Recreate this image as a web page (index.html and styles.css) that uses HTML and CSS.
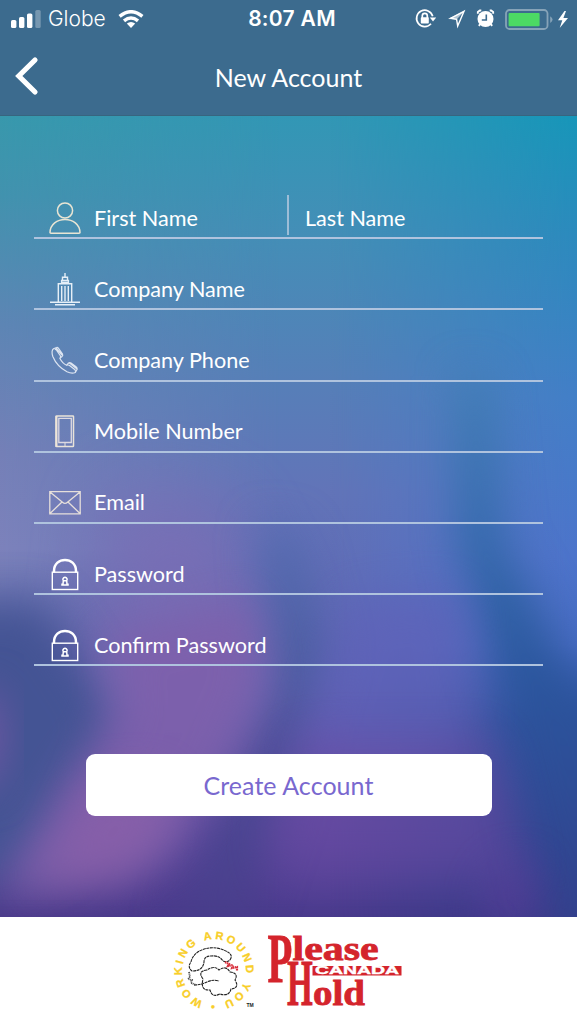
FILE: index.html
```html
<!DOCTYPE html>
<html lang="en">
<head>
<meta charset="utf-8">
<title>New Account</title>
<link rel="stylesheet" href="styles.css">
</head>
<body>
<div class="screen">
  <header class="header">
    <div class="status">
      <div class="status-left">
        <svg class="signal" width="31" height="18" viewBox="0 0 31 18" fill="#fff"><rect x="0" y="10" width="5.4" height="8" rx="1.6"/><rect x="8" y="7" width="5.4" height="11" rx="1.6"/><rect x="16" y="3.500" width="5.400" height="14.500" rx="1.600"/><rect x="24.300" y="0" width="5.400" height="18" rx="1.600" opacity=".3"/></svg>
        <span class="carrier">Globe</span>
        <svg width="26" height="18" viewBox="0 0 26 18" fill="none" stroke="#fff" stroke-width="3.400"><path d="M1.600 6.400Q13-3 24.400 6.400M6 10.900Q13 5 20 10.900"/><path d="M8.800 13.600Q13 10.400 17.200 13.600L13 18Z" fill="#fff" stroke="none"/></svg>
      </div>
      <span class="clock">8:07 AM</span>
      <svg class="indicators" width="156" height="24" viewBox="0 0 156 24" fill="none">
        <g stroke="#fff" stroke-width="1.700"><path d="M18.700 9.200A8.200 8.200 0 1 0 17 16.800"/><path d="M8.300 11V8.800a2.500 2.500 0 0 1 5 0V11"/></g><rect x="6.800" y="10.300" width="8" height="6.300" rx=".8" fill="#fff"/><path d="M15.800 10.500H22.200L19 14.500Z" fill="#fff"/>
        <path d="M36.500 11.300L50 4.300L43.700 19L42.600 12.400Z" stroke="#fff" stroke-width="1.400"/><path d="M34 12L51 3.500L42.600 12.500Z" fill="#fff" opacity=".6"/>
        <circle cx="71.500" cy="12" r="8" fill="#fff"/><path d="M63.800 6.800V5l2-1.500h1.500M79.200 6.800V5l-2-1.500h-1.500M66 17l-1 2M77 17l1 2" stroke="#fff" stroke-width="1.800"/><path d="M72.300 7.500V13h-4.500" stroke="#3c6b8e" stroke-width="1.600"/>
        <rect x="92" y="3" width="41.500" height="19" rx="3.500" stroke="#86a3b8" stroke-width="1.800"/><rect x="94.600" y="6" width="31" height="13.200" rx="1" fill="#4cd964"/><path d="M136.200 9.200Q141 12.500 136.200 16Z" fill="#86a3b8"/><path d="M150.500 4L144 13.300h4.300L145.700 21L154 10.900h-4.600L152 4Z" fill="#fff"/>
      </svg>
    </div>
    <div class="nav">
      <svg class="back" width="24" height="40" viewBox="0 0 24 40" fill="none" stroke="#fff" stroke-width="5.200" stroke-linecap="round"><path d="M20 4L3.800 20L20 36"/></svg>
      <h1 class="title">New Account</h1>
    </div>
  </header>

  <main class="content">
    <svg class="backdrop" viewBox="0 116 577 801" preserveAspectRatio="none">
      <defs>
        <linearGradient id="left" x2="0" y2="1"><stop offset="0" stop-color="#3898ac"/><stop offset=".1" stop-color="#4292ae"/><stop offset=".26" stop-color="#5d85b4"/><stop offset=".42" stop-color="#7480b7"/><stop offset=".54" stop-color="#7c82bb"/><stop offset=".62" stop-color="#6870ae"/><stop offset=".75" stop-color="#4c5199"/><stop offset="1" stop-color="#4b3a8a"/></linearGradient>
        <linearGradient id="middle" x2="0" y2="1"><stop offset="0" stop-color="#3297b5"/><stop offset=".15" stop-color="#448eb7"/><stop offset=".33" stop-color="#567fb8"/><stop offset=".47" stop-color="#6274b8"/><stop offset=".7" stop-color="#6065b6"/><stop offset=".85" stop-color="#624ca2"/><stop offset="1" stop-color="#4b3b8e"/></linearGradient>
        <linearGradient id="right" x2="0" y2="1"><stop offset="0" stop-color="#1796b9"/><stop offset=".15" stop-color="#2c8abd"/><stop offset=".35" stop-color="#427fc7"/><stop offset=".55" stop-color="#4c74cb"/><stop offset=".66" stop-color="#486cc4"/><stop offset=".76" stop-color="#2b519c"/><stop offset="1" stop-color="#353b88"/></linearGradient>
        <linearGradient id="valley" x2="0" y2="1"><stop offset="0" stop-color="#506caf"/><stop offset=".35" stop-color="#4a5b9f"/><stop offset=".6" stop-color="#4b4994"/><stop offset="1" stop-color="#493c8a"/></linearGradient>
        <linearGradient id="channel" x2="0" y2="1"><stop offset="0" stop-color="#3c7dae"/><stop offset=".25" stop-color="#2f6ba9"/><stop offset=".55" stop-color="#2b559d"/><stop offset="1" stop-color="#33408c"/></linearGradient>
        <linearGradient id="fadeRight"><stop offset="0" stop-color="#000"/><stop offset="1" stop-color="#fff"/></linearGradient>
        <linearGradient id="fadeLeft"><stop offset="0" stop-color="#fff"/><stop offset="1" stop-color="#000"/></linearGradient>
        <mask id="maskRight"><rect x="330" y="116" width="247" height="801" fill="url(#fadeRight)"/></mask>
        <mask id="maskLeft"><rect x="0" y="116" width="280" height="801" fill="url(#fadeLeft)"/></mask>
        <filter id="soft" x="-60%" y="-60%" width="220%" height="220%" color-interpolation-filters="sRGB"><feGaussianBlur stdDeviation="22"/></filter>
        <filter id="wide" x="-60%" y="-60%" width="220%" height="220%" color-interpolation-filters="sRGB"><feGaussianBlur stdDeviation="36"/></filter>
      </defs>
      <rect y="116" width="577" height="801" fill="url(#middle)"/>
      <rect y="116" width="280" height="801" fill="url(#left)" mask="url(#maskLeft)"/>
      <rect x="330" y="116" width="247" height="801" fill="url(#right)" mask="url(#maskRight)"/>
      <path d="M110 490L220 500L280 620L250 750L60 740L100 600Z" fill="#7c6cb4" opacity=".75" filter="url(#wide)"/>
      <path d="M-60 608L40 602L72 650L118 720L60 860L-60 900Z" fill="#445494" filter="url(#soft)"/>
      <path d="M-40 690L0 700L-3 780L-40 790Z" fill="#7657a5" filter="url(#soft)"/>
      <path d="M262 525L295 535L328 650L290 780L235 950L170 950L215 810L275 690Z" fill="url(#valley)" filter="url(#soft)"/>
      <path d="M105 635L250 600L265 680L225 775L165 860L-10 905L75 770L120 710Z" fill="#7e60ac" opacity=".9" filter="url(#soft)"/>
      <path d="M90 780L165 775L170 830L130 885L30 890Z" fill="#8c60a9" opacity=".7" filter="url(#soft)"/>
      <path d="M462 375L485 380L500 540L570 670L620 730L620 940L560 940L505 720L460 540Z" fill="url(#channel)" filter="url(#soft)"/>
      <path d="M350 600L460 590L475 745L400 780L300 770Z" fill="#6061b9" opacity=".6" filter="url(#soft)"/>
      <path d="M300 740L490 740L525 880L280 880L270 830Z" fill="#6b4ba4" opacity=".5" filter="url(#soft)"/>
      <path d="M495 875L530 860L540 925L480 930Z" fill="#6a3fa0" opacity=".5" filter="url(#soft)"/>
      <path d="M-60 930H480V980H-60Z" fill="#403783" opacity=".7" filter="url(#soft)"/>
    </svg>
    <form class="form">
      <div class="row names">
        <div class="name-cell first">
          <svg class="icon" viewBox="0 0 34 34" fill="none" stroke="#e9e5d4" stroke-width="1.500"><circle cx="17" cy="9.500" r="7.600"/><path d="M2 31.800C2 14 32 14 32 31.800Q32 32.200 31 32.200H3Q2 32.200 2 31.800Z"/></svg>
          <label>First Name</label>
        </div>
        <div class="name-cell last"><label>Last Name</label></div>
      </div>
      <div class="row">
        <svg class="icon" viewBox="0 0 34 34" fill="none" stroke="#e6eff7" stroke-width="1.400"><path d="M17 1V5.500M14.500 9V5.200h5V9M13.600 12V8.500h6.800v3M14 10.500h6M10.300 30.500V11.700h13.400V30.500M13.700 14v15M17 14v15M20.300 14v15M2 30.300h30M7 32.800h20"/></svg>
        <label>Company Name</label>
      </div>
      <div class="row">
        <svg class="icon" viewBox="0 0 34 34" fill="none" stroke="#dce4f1" stroke-width="1.200" stroke-linejoin="round"><path d="M8.500 3.500L5.500 4.700Q3 6.500 4.800 12.500Q9 22.500 19 27.800Q24 30.200 27.300 28.500L29.200 25.300Q29.400 24.100 28 22.800L23 19Q21.500 18.200 20 19.500L18.600 21.300Q14.500 19.500 11.800 14.300L14 12.500Q15.300 11.500 14.400 9.800L10.500 4.300Q9.500 3 8.500 3.500ZM6.800 5.700Q7.500 5 8.400 6L12.500 12Q12.800 13.200 11.800 14.300M18.600 21.300Q20 20.700 21.200 21.300L27 25.800Q28 27.200 27.300 28.500M8 4L14 11M21.500 19L29 25"/></svg>
        <label>Company Phone</label>
      </div>
      <div class="row">
        <svg class="icon" viewBox="0 0 34 34" fill="none"><rect x="8" y="1" width="17.500" height="30.500" rx=".6" stroke="#e9e3d9" stroke-width="1.500"/><path d="M8.500 1V32" stroke="#eee5d8" stroke-width="2"/><path d="M10.800 3.300H23.300V27.500H10.800Z" stroke="#ddd9e2" stroke-width="1.300"/><path d="M17 28v3" stroke="#e9e3d9"/></svg>
        <label>Mobile Number</label>
      </div>
      <div class="row">
        <svg class="icon" viewBox="0 0 34 34" fill="none" stroke="#e6dfdb" stroke-width="1.300"><path d="M1.800 5.600H32.200V27.800H1.800ZM2 6L14.500 16.300Q17 18.500 19.500 16.300L32 6M2 27.500L14 16M32 27.500L20 16"/></svg>
        <label>Email</label>
      </div>
      <div class="row">
        <svg class="icon" viewBox="0 0 34 34" fill="none" stroke="#fff"><path d="M6 15.500V14C6-.8 28-.8 28 14V15.500" stroke-width="2.500"/><rect x="4.300" y="15.200" width="25.400" height="17.300" stroke-width="1.400"/><path d="M15.300 23.700A2.100 2.100 0 1 1 18.700 23.700H15.300L15 27.300H14V28H20V27.300H19L18.700 23.700" stroke-width="1.500"/></svg>
        <label>Password</label>
      </div>
      <div class="row">
        <svg class="icon" viewBox="0 0 34 34" fill="none" stroke="#fff"><path d="M6 15.500V14C6-.8 28-.8 28 14V15.500" stroke-width="2.500"/><rect x="4.300" y="15.200" width="25.400" height="17.300" stroke-width="1.400"/><path d="M15.300 23.700A2.100 2.100 0 1 1 18.700 23.700H15.300L15 27.300H14V28H20V27.300H19L18.700 23.700" stroke-width="1.500"/></svg>
        <label>Confirm Password</label>
      </div>
      <button class="submit" type="button">Create Account</button>
    </form>
  </main>

  <footer class="footer">
    <svg width="577" height="107" viewBox="0 917 577 107">
      <defs><path id="ring" d="M202 1003.500A34.500 34.500 0 1 1 226 1003.500A34.500 34.500 0 0 1 202 1003.500"/></defs>
      <text class="ring-text" dy="2.500"><textPath href="#ring" startOffset="0" textLength="207">WORKING AROUND YOU •</textPath></text>
      <g fill="none" stroke="#222" stroke-width="1.100" stroke-dasharray="3 .6">
        <path d="M191 962C193 951 208 945 221 949Q233 953 231 958Q229 963 223 961Q219 955 211 956Q204 956 204 962Q203 971 192 971Q187 967 191 962Z"/>
        <path d="M203 979Q197 971 207 970Q214 965 219 970Q226 965 230 972Q239 973 235 980Q240 988 231 989Q229 997 220 994Q212 998 210 990Q200 991 203 979M194 985Q201 985 207 982T219 981"/>
      </g>
      <path d="M189 972l1 5-2 2 4 1-1 3 5 2" fill="none" stroke="#444" stroke-width="1.800" stroke-dasharray="1 .7"/>
      <path d="M225 962l4 2-1 2 5-1-1 3 5-1v4" fill="none" stroke="#d8303c" stroke-width="2.200" stroke-dasharray="1.500 .5"/>
      <text class="tm" x="246.500" y="1006.500">TM</text>
      <g class="brand">
        <text transform="translate(267.500 982) scale(.58 1)" font-size="70">P</text>
        <text x="292.500" y="960" font-size="34.500" textLength="86" lengthAdjust="spacingAndGlyphs">lease</text>
        <text transform="translate(287 1004.500) scale(.51 1)" font-size="65">H</text>
        <text x="313" y="1004.500" font-size="35.500" textLength="52" lengthAdjust="spacingAndGlyphs">old</text>
      </g>
      <rect x="312.500" y="966" width="89" height="9.500" fill="#d4242c"/>
      <text class="canada" x="315" y="974.200" textLength="84" lengthAdjust="spacingAndGlyphs">CANADA</text>
    </svg>
  </footer>
</div>
</body>
</html>
```
FILE: styles.css
```css
* { box-sizing: border-box; }
body { margin: 0; font-family: Lato, sans-serif; }
svg { display: block; flex: none; }
.screen { width: 577px; height: 1024px; display: flex; flex-direction: column; overflow: hidden; }
.header { height: 116px; background: #3c6b8e; border-bottom: 1px solid #38657f; color: #fff; }
.status { height: 37px; display: grid; grid-template-columns: 1fr auto 1fr; align-items: center; padding: 0 7px 0 11px; font-family: Inter, sans-serif; font-size: 22px; }
.status-left { display: flex; align-items: center; }
.carrier { margin: 0 12px 0 6px; font-weight: 300; font-size: 21px; }
.clock { font-weight: 600; font-size: 21px; letter-spacing: .3px; margin: 0 0 0 3px; }
.indicators { justify-self: end; }
.nav { height: 78px; display: grid; grid-template-columns: 40px 1fr 40px; align-items: center; padding: 0 15px; }
.title { margin: 1px 0 0; text-align: center; font-size: 25px; font-weight: 400; }
.content { height: 801px; flex: none; position: relative; overflow: hidden; }
.backdrop { position: absolute; inset: 0; width: 100%; height: 100%; }
.form { position: relative; display: flex; flex-direction: column; padding: 52px 34px 0; }
.row { height: 71.200px; border-bottom: 2px solid #afc3de; padding: 0 0 2px 14px; display: flex; align-items: flex-end; gap: 12px; color: #fff; font-size: 21.600px; }
.row label { line-height: 34px; padding-bottom: .6px; }
.icon { width: 34px; height: 34px; }
.names { padding-left: 0; gap: 0; }
.name-cell { height: 40px; display: flex; align-items: flex-end; gap: 12px; }
.first { width: 255px; padding-left: 14px; border-right: 2px solid #9dbdd7; }
.last { padding-left: 16px; }
.submit { width: 406px; height: 62px; margin: 88px auto 0; border: 0; border-radius: 9px; background: #fff; color: #7968cf; font: 400 25px Lato, sans-serif; letter-spacing: .05px; padding: 0; }
.footer { height: 107px; flex: none; background: #fff; }
.ring-text { font: 700 11px "Liberation Sans", Arial, sans-serif; fill: #f8ce28; stroke: #f8ce28; stroke-width: .3; }
.tm { font: 700 5px "Liberation Sans", Arial, sans-serif; fill: #222; }
.brand { font-family: "Liberation Serif", serif; font-weight: 700; fill: #d4242c; stroke: #d4242c; stroke-width: .8; }
.canada { font: 700 10.500px "Liberation Sans", Arial, sans-serif; fill: #fff; stroke: #fff; stroke-width: .4; }
```
